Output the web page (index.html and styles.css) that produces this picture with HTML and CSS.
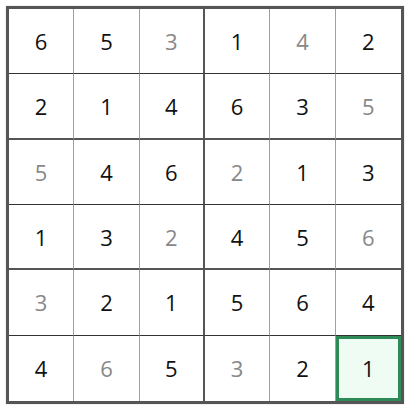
FILE: index.html
```html
<!DOCTYPE html>
<html>
<head>
<meta charset="utf-8">
<link rel="stylesheet" href="styles.css">
</head>
<body>
<div class="board">
  <div class="cell">6</div><div class="cell">5</div><div class="cell given box-r">3</div><div class="cell">1</div><div class="cell given">4</div><div class="cell">2</div>
  <div class="cell box-b">2</div><div class="cell box-b">1</div><div class="cell box-b box-r">4</div><div class="cell box-b">6</div><div class="cell box-b">3</div><div class="cell given box-b">5</div>
  <div class="cell given">5</div><div class="cell">4</div><div class="cell box-r">6</div><div class="cell given">2</div><div class="cell">1</div><div class="cell">3</div>
  <div class="cell box-b">1</div><div class="cell box-b">3</div><div class="cell given box-b box-r">2</div><div class="cell box-b">4</div><div class="cell box-b">5</div><div class="cell given box-b">6</div>
  <div class="cell given">3</div><div class="cell">2</div><div class="cell box-r">1</div><div class="cell">5</div><div class="cell">6</div><div class="cell">4</div>
  <div class="cell">4</div><div class="cell given">6</div><div class="cell box-r">5</div><div class="cell given">3</div><div class="cell">2</div><div class="cell selected">1</div>
</div>
</body>
</html>
```
FILE: styles.css
```css
html, body {
  margin: 0;
  background: #ffffff;
}
body {
  padding: 6px;
  font-family: "Open Sans", "Noto Sans", sans-serif;
}
.board {
  width: 398px;
  height: 398px;
  box-sizing: border-box;
  border: 3px solid #555555;
  display: grid;
  grid-template-columns: repeat(6, 1fr);
  grid-template-rows: repeat(6, 1fr);
  box-shadow: 0 0 1px rgba(0,0,0,0.3);
}
.cell {
  display: flex;
  align-items: center;
  justify-content: center;
  font-size: 22px;
  color: #111111;
  border-right: 1px solid #a0a0a0;
  border-bottom: 1px solid #333333;
  box-sizing: border-box;
}
.cell:nth-child(6n) {
  border-right: none;
}
.cell:nth-child(n+31) {
  border-bottom: none;
}
.cell.given {
  color: #888888;
}
.cell.box-r {
  border-right: 2px solid #555555;
}
.cell.box-b {
  border-bottom: 2px solid #555555;
}
.cell.selected {
  background: #effcf3;
  border: 3px solid #2e8b57;
}
```
